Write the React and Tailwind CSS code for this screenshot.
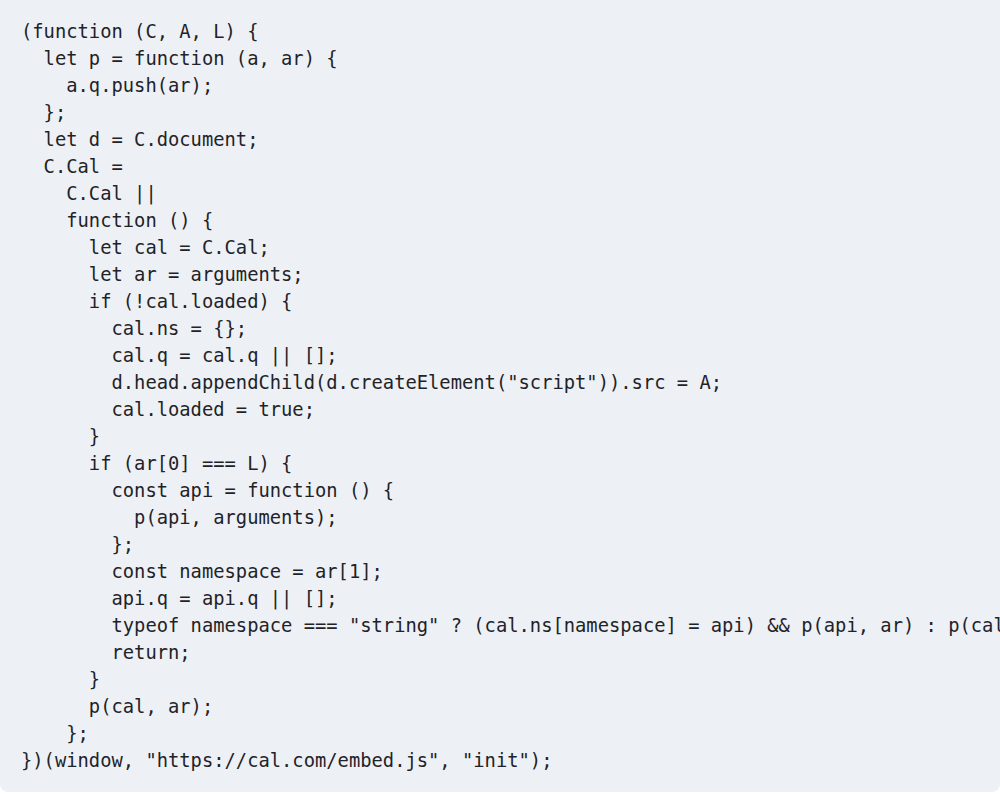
const code = `(function (C, A, L) {
  let p = function (a, ar) {
    a.q.push(ar);
  };
  let d = C.document;
  C.Cal =
    C.Cal ||
    function () {
      let cal = C.Cal;
      let ar = arguments;
      if (!cal.loaded) {
        cal.ns = {};
        cal.q = cal.q || [];
        d.head.appendChild(d.createElement("script")).src = A;
        cal.loaded = true;
      }
      if (ar[0] === L) {
        const api = function () {
          p(api, arguments);
        };
        const namespace = ar[1];
        api.q = api.q || [];
        typeof namespace === "string" ? (cal.ns[namespace] = api) && p(api, ar) : p(cal, ar);
        return;
      }
      p(cal, ar);
    };
})(window, "https://cal.com/embed.js", "init");`

export default function App() {
  return (
    <div className="bg-white w-[1000px] h-[795px] overflow-hidden">
      <div className="bg-[#edf1f5] h-[792px] rounded-b-lg overflow-hidden pl-[21px] pt-[18px]">
        <div className="text-[18.8px] leading-[27px] text-[#1f2328] font-['DejaVu_Sans_Mono',monospace] whitespace-pre">
          {code}
        </div>
      </div>
    </div>
  )
}
